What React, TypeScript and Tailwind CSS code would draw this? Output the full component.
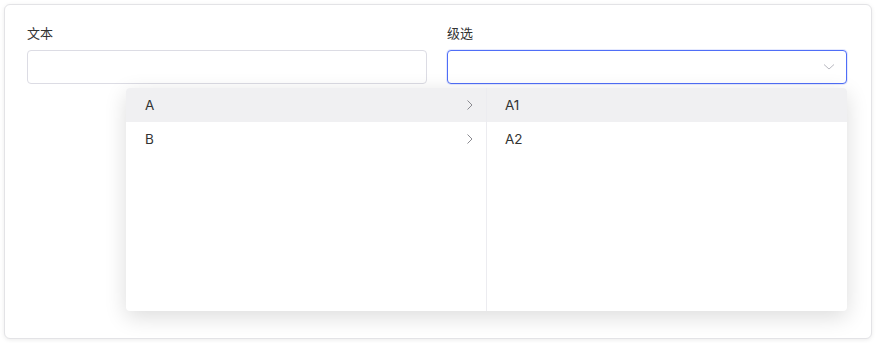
import React from "react";

const font = { fontFamily: '"Inter","Noto Sans CJK SC",sans-serif' };

function Chevron({ className }: { className?: string }) {
  return (
    <svg width="8" height="12" viewBox="0 0 8 12" className={className}>
      <path d="M1.5 1.5 L6 6 L1.5 10.5" fill="none" stroke="currentColor" strokeWidth="1" />
    </svg>
  );
}

export default function App() {
  return (
    <div className="w-[877px] h-[343px] bg-white p-[4px]" style={font}>
      <div className="relative h-[335px] w-[868px] rounded-[6px] border border-[#e3e3e6] bg-white shadow-[0_1px_4px_rgba(0,0,0,0.08)] px-[22px] pt-[18px]">
        <div className="flex gap-[20px]">
          <div className="flex w-[400px] flex-col">
            <div className="h-[20px] text-[13px] leading-[20px] text-[#333]">文本</div>
            <div className="mt-[7px] h-[34px] rounded-[4px] border border-[#dcdce4] bg-white" />
          </div>
          <div className="flex w-[400px] flex-col">
            <div className="h-[20px] text-[13px] leading-[20px] text-[#333]">级选</div>
            <div className="mt-[7px] flex h-[34px] items-center justify-end rounded-[4px] border border-[#4f6ef7] bg-white pr-[11px] shadow-[0_0_0_1px_rgba(79,110,247,0.15)]">
              <svg width="12" height="8" viewBox="0 0 12 8">
                <path d="M1 1.5 L6 6 L11 1.5" fill="none" stroke="#b8b8c0" strokeWidth="1" />
              </svg>
            </div>
          </div>
        </div>
        <div className="absolute left-[121px] top-[83px] flex h-[223px] w-[721px] overflow-hidden rounded-[4px] bg-white shadow-[0_6px_22px_rgba(0,0,0,0.14)] text-[13.5px] text-[#333]">
          <div className="w-[361px] border-r border-[#ececf0]">
            <div className="flex h-[34px] items-center justify-between bg-[#f0f0f2] pl-[19px] pr-[12px]">
              <span>A</span>
              <Chevron className="text-[#8a8a90]" />
            </div>
            <div className="flex h-[34px] items-center justify-between pl-[19px] pr-[12px]">
              <span>B</span>
              <Chevron className="text-[#8a8a90]" />
            </div>
          </div>
          <div className="flex-1">
            <div className="flex h-[34px] items-center bg-[#f0f0f2] pl-[18px]">A1</div>
            <div className="flex h-[34px] items-center pl-[18px]">A2</div>
          </div>
        </div>
      </div>
    </div>
  );
}
